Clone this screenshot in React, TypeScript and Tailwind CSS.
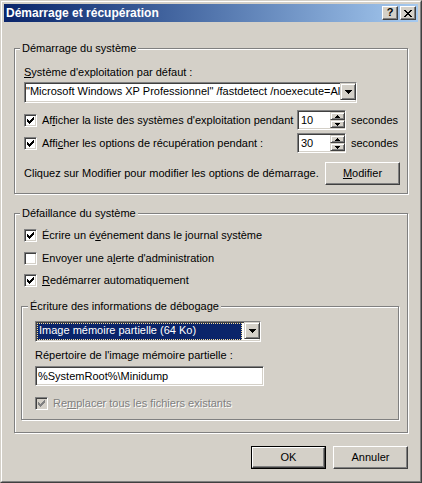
import React from "react";

const sunken =
  "border border-t-[#808080] border-l-[#808080] border-b-white border-r-white shadow-[inset_1px_1px_0_#404040,inset_-1px_-1px_0_#D4D0C8]";
const raised =
  "border border-t-white border-l-white border-b-[#404040] border-r-[#404040] shadow-[inset_-1px_-1px_0_#808080]";
const raisedInner =
  "border border-t-[#D4D0C8] border-l-[#D4D0C8] border-b-[#404040] border-r-[#404040] shadow-[inset_1px_1px_0_#fff,inset_-1px_-1px_0_#808080]";
const etched = "border border-[#808080] shadow-[inset_1px_1px_0_#fff,1px_1px_0_#fff]";

function CheckMark({ color = "#000" }: { color?: string }) {
  return (
    <svg width="7" height="7" viewBox="0 0 7 7" shapeRendering="crispEdges" className="absolute left-[2px] top-[2px]">
      <g fill={color}>
        <rect x="6" y="0" width="1" height="1" />
        <rect x="5" y="1" width="2" height="1" />
        <rect x="0" y="2" width="1" height="1" />
        <rect x="4" y="2" width="3" height="1" />
        <rect x="0" y="3" width="2" height="1" />
        <rect x="3" y="3" width="3" height="1" />
        <rect x="0" y="4" width="5" height="1" />
        <rect x="1" y="5" width="3" height="1" />
        <rect x="2" y="6" width="1" height="1" />
      </g>
    </svg>
  );
}

function Check({ checked, disabled }: { checked?: boolean; disabled?: boolean }) {
  return (
    <div className={`relative w-[13px] h-[13px] shrink-0 ${sunken} ${disabled ? "bg-[#D4D0C8]" : "bg-white"}`}>
      {checked && <CheckMark color={disabled ? "#808080" : "#000"} />}
    </div>
  );
}

function DownArrow() {
  return (
    <svg width="7" height="4" viewBox="0 0 7 4" shapeRendering="crispEdges">
      <g fill="#000">
        <rect x="0" y="0" width="7" height="1" />
        <rect x="1" y="1" width="5" height="1" />
        <rect x="2" y="2" width="3" height="1" />
        <rect x="3" y="3" width="1" height="1" />
      </g>
    </svg>
  );
}

function SmallArrow({ up }: { up?: boolean }) {
  return (
    <svg width="5" height="3" viewBox="0 0 5 3" shapeRendering="crispEdges">
      {up ? (
        <g fill="#000">
          <rect x="2" y="0" width="1" height="1" />
          <rect x="1" y="1" width="3" height="1" />
          <rect x="0" y="2" width="5" height="1" />
        </g>
      ) : (
        <g fill="#000">
          <rect x="0" y="0" width="5" height="1" />
          <rect x="1" y="1" width="3" height="1" />
          <rect x="2" y="2" width="1" height="1" />
        </g>
      )}
    </svg>
  );
}

function DropButton() {
  return (
    <div className={`w-[16px] h-[17px] shrink-0 bg-[#D4D0C8] flex items-center justify-center ${raisedInner}`}>
      <DownArrow />
    </div>
  );
}

function Spin({ value }: { value: string }) {
  return (
    <div className={`w-[49px] h-[20px] bg-white flex shrink-0 ${sunken}`}>
      <div className="flex-1 pl-[3px] pt-[1px] leading-[16px]">{value}</div>
      <div className="flex flex-col w-[15px] mt-[1px]">
        <div className={`h-[8px] bg-[#D4D0C8] flex items-center justify-center ${raisedInner}`}>
          <SmallArrow up />
        </div>
        <div className={`h-[8px] bg-[#D4D0C8] flex items-center justify-center ${raisedInner}`}>
          <SmallArrow />
        </div>
      </div>
    </div>
  );
}

function Group({
  label,
  className,
  labelLeft,
  children,
}: {
  label: string;
  className: string;
  labelLeft: string;
  children: React.ReactNode;
}) {
  return (
    <div className={`relative shrink-0 ${etched} ${className}`}>
      <span className={`absolute -top-[7px] ${labelLeft} px-[2px] bg-[#D4D0C8] leading-[13px] whitespace-nowrap`}>
        {label}
      </span>
      <div className="flex flex-col">{children}</div>
    </div>
  );
}

function Button({ children, isDefault }: { children: React.ReactNode; isDefault?: boolean }) {
  if (isDefault) {
    return (
      <div className="w-[75px] h-[23px] border border-black shrink-0">
        <div className={`w-full h-full flex items-center justify-center bg-[#D4D0C8] ${raised}`}>{children}</div>
      </div>
    );
  }
  return (
    <div className={`w-[75px] h-[23px] shrink-0 flex items-center justify-center bg-[#D4D0C8] ${raised}`}>
      {children}
    </div>
  );
}

function TitleButton({ children }: { children: React.ReactNode }) {
  return (
    <div className={`w-[16px] h-[14px] bg-[#D4D0C8] flex items-center justify-center ${raised}`}>{children}</div>
  );
}

export default function App() {
  return (
    <div className="w-[422px] h-[483px] font-['Liberation_Sans',Arial,sans-serif] text-[11px] leading-[13px] text-black select-none">
      <div className="w-full h-full border border-t-[#D4D0C8] border-l-[#D4D0C8] border-b-[#404040] border-r-[#404040] bg-[#D4D0C8]">
        <div className="w-full h-full border border-t-white border-l-white border-b-[#808080] border-r-[#808080] p-[2px] flex flex-col">
          {/* Title bar */}
          <div className="h-[18px] shrink-0 flex items-center bg-linear-to-r from-[#0A246A] to-[#A6CAF0] pl-[2px] pr-[2px]">
            <span className="flex-1 text-white font-bold text-[12px] leading-[14px] whitespace-nowrap">
              Démarrage et récupération
            </span>
            <div className="flex gap-[2px]">
              <TitleButton>
                <span className="font-bold text-[11px] leading-[11px] -mt-[1px]">?</span>
              </TitleButton>
              <TitleButton>
                <svg width="8" height="7" viewBox="0 0 8 7" shapeRendering="crispEdges">
                  <g fill="#000">
                    <rect x="0" y="0" width="2" height="1" />
                    <rect x="6" y="0" width="2" height="1" />
                    <rect x="1" y="1" width="2" height="1" />
                    <rect x="5" y="1" width="2" height="1" />
                    <rect x="2" y="2" width="4" height="1" />
                    <rect x="3" y="3" width="2" height="1" />
                    <rect x="2" y="4" width="4" height="1" />
                    <rect x="1" y="5" width="2" height="1" />
                    <rect x="5" y="5" width="2" height="1" />
                    <rect x="0" y="6" width="2" height="1" />
                    <rect x="6" y="6" width="2" height="1" />
                  </g>
                </svg>
              </TitleButton>
            </div>
          </div>

          {/* Body */}
          <div className="flex flex-col">
            <Group label="Démarrage du système" labelLeft="left-[5px]" className="ml-[10px] mt-[26px] w-[394px] h-[146px]">
              <div className="pl-[9px] flex flex-col">
                <div className="mt-[17px] h-[13px]">
                  <span className="underline">S</span>ystème d'exploitation par défaut :
                </div>
                <div className={`mt-[3px] w-[333px] h-[21px] bg-white flex ${sunken}`}>
                  <div className="flex-1 whitespace-nowrap pl-[1px] leading-[17px]">
                    "Microsoft Windows XP Professionnel" /fastdetect /noexecute=Al
                  </div>
                  <DropButton />
                </div>
                <div className="mt-[7px] h-[20px] flex items-center">
                  <div className="w-[273px] flex items-center gap-[5px]">
                    <Check checked />
                    <span className="whitespace-nowrap">
                      Af<span className="underline">f</span>icher la liste des systèmes d'exploitation pendant
                    </span>
                  </div>
                  <Spin value="10" />
                  <span className="ml-[5px]">secondes</span>
                </div>
                <div className="mt-[3px] h-[20px] flex items-center">
                  <div className="w-[273px] flex items-center gap-[5px]">
                    <Check checked />
                    <span className="whitespace-nowrap">
                      Affi<span className="underline">c</span>her les options de récupération pendant :
                    </span>
                  </div>
                  <Spin value="30" />
                  <span className="ml-[5px]">secondes</span>
                </div>
                <div className="mt-[9px] h-[23px] flex items-center">
                  <div className="w-[301px] whitespace-nowrap">
                    Cliquez sur Modifier pour modifier les options de démarrage.
                  </div>
                  <Button>
                    <span>
                      <span className="underline">M</span>odifier
                    </span>
                  </Button>
                </div>
              </div>
            </Group>

            <Group label="Défaillance du système" labelLeft="left-[5px]" className="ml-[10px] mt-[19px] w-[394px] h-[220px]">
              <div className="ml-[9px] mt-[13px] h-[16px] flex items-center gap-[5px]">
                <Check checked />
                <span>
                  Écrire un é<span className="underline">v</span>énement dans le journal système
                </span>
              </div>
              <div className="ml-[9px] mt-[7px] h-[16px] flex items-center gap-[5px]">
                <Check />
                <span>
                  Envoyer une a<span className="underline">l</span>erte d'administration
                </span>
              </div>
              <div className="ml-[9px] mt-[6px] h-[16px] flex items-center gap-[5px]">
                <Check checked />
                <span>
                  <span className="underline">R</span>edémarrer automatiquement
                </span>
              </div>
              <div className="ml-[6px] mt-[18px]">
                <Group label="Écriture des informations de débogage" labelLeft="left-[6px]" className="w-[378px] h-[114px]">
                  <div className={`ml-[13px] mt-[14px] w-[226px] h-[21px] bg-white flex ${sunken}`}>
                    <div className="flex-1 m-[1px] mr-[2px] bg-[#0A246A] border border-dotted border-[#F5DB95] text-white whitespace-nowrap leading-[13px] pl-[1px]">
                      Image mémoire partielle (64 Ko)
                    </div>
                    <DropButton />
                  </div>
                  <div className="ml-[13px] mt-[7px] h-[13px]">Répertoire de l'image mémoire partielle :</div>
                  <div className={`ml-[13px] mt-[4px] w-[229px] h-[20px] bg-white ${sunken}`}>
                    <div className="pl-[2px] pt-[1px] leading-[16px] whitespace-nowrap">%SystemRoot%\Minidump</div>
                  </div>
                  <div className="ml-[13px] mt-[9px] h-[16px] flex items-center gap-[5px]">
                    <Check checked disabled />
                    <span className="text-[#808080] [text-shadow:1px_1px_0_#fff]">
                      Re<span className="underline">m</span>placer tous les fichiers existants
                    </span>
                  </div>
                </Group>
              </div>
            </Group>

            <div className="mt-[13px] flex justify-end gap-[7px] pr-[10px]">
              <Button isDefault>OK</Button>
              <Button>Annuler</Button>
            </div>
          </div>
        </div>
      </div>
    </div>
  );
}
